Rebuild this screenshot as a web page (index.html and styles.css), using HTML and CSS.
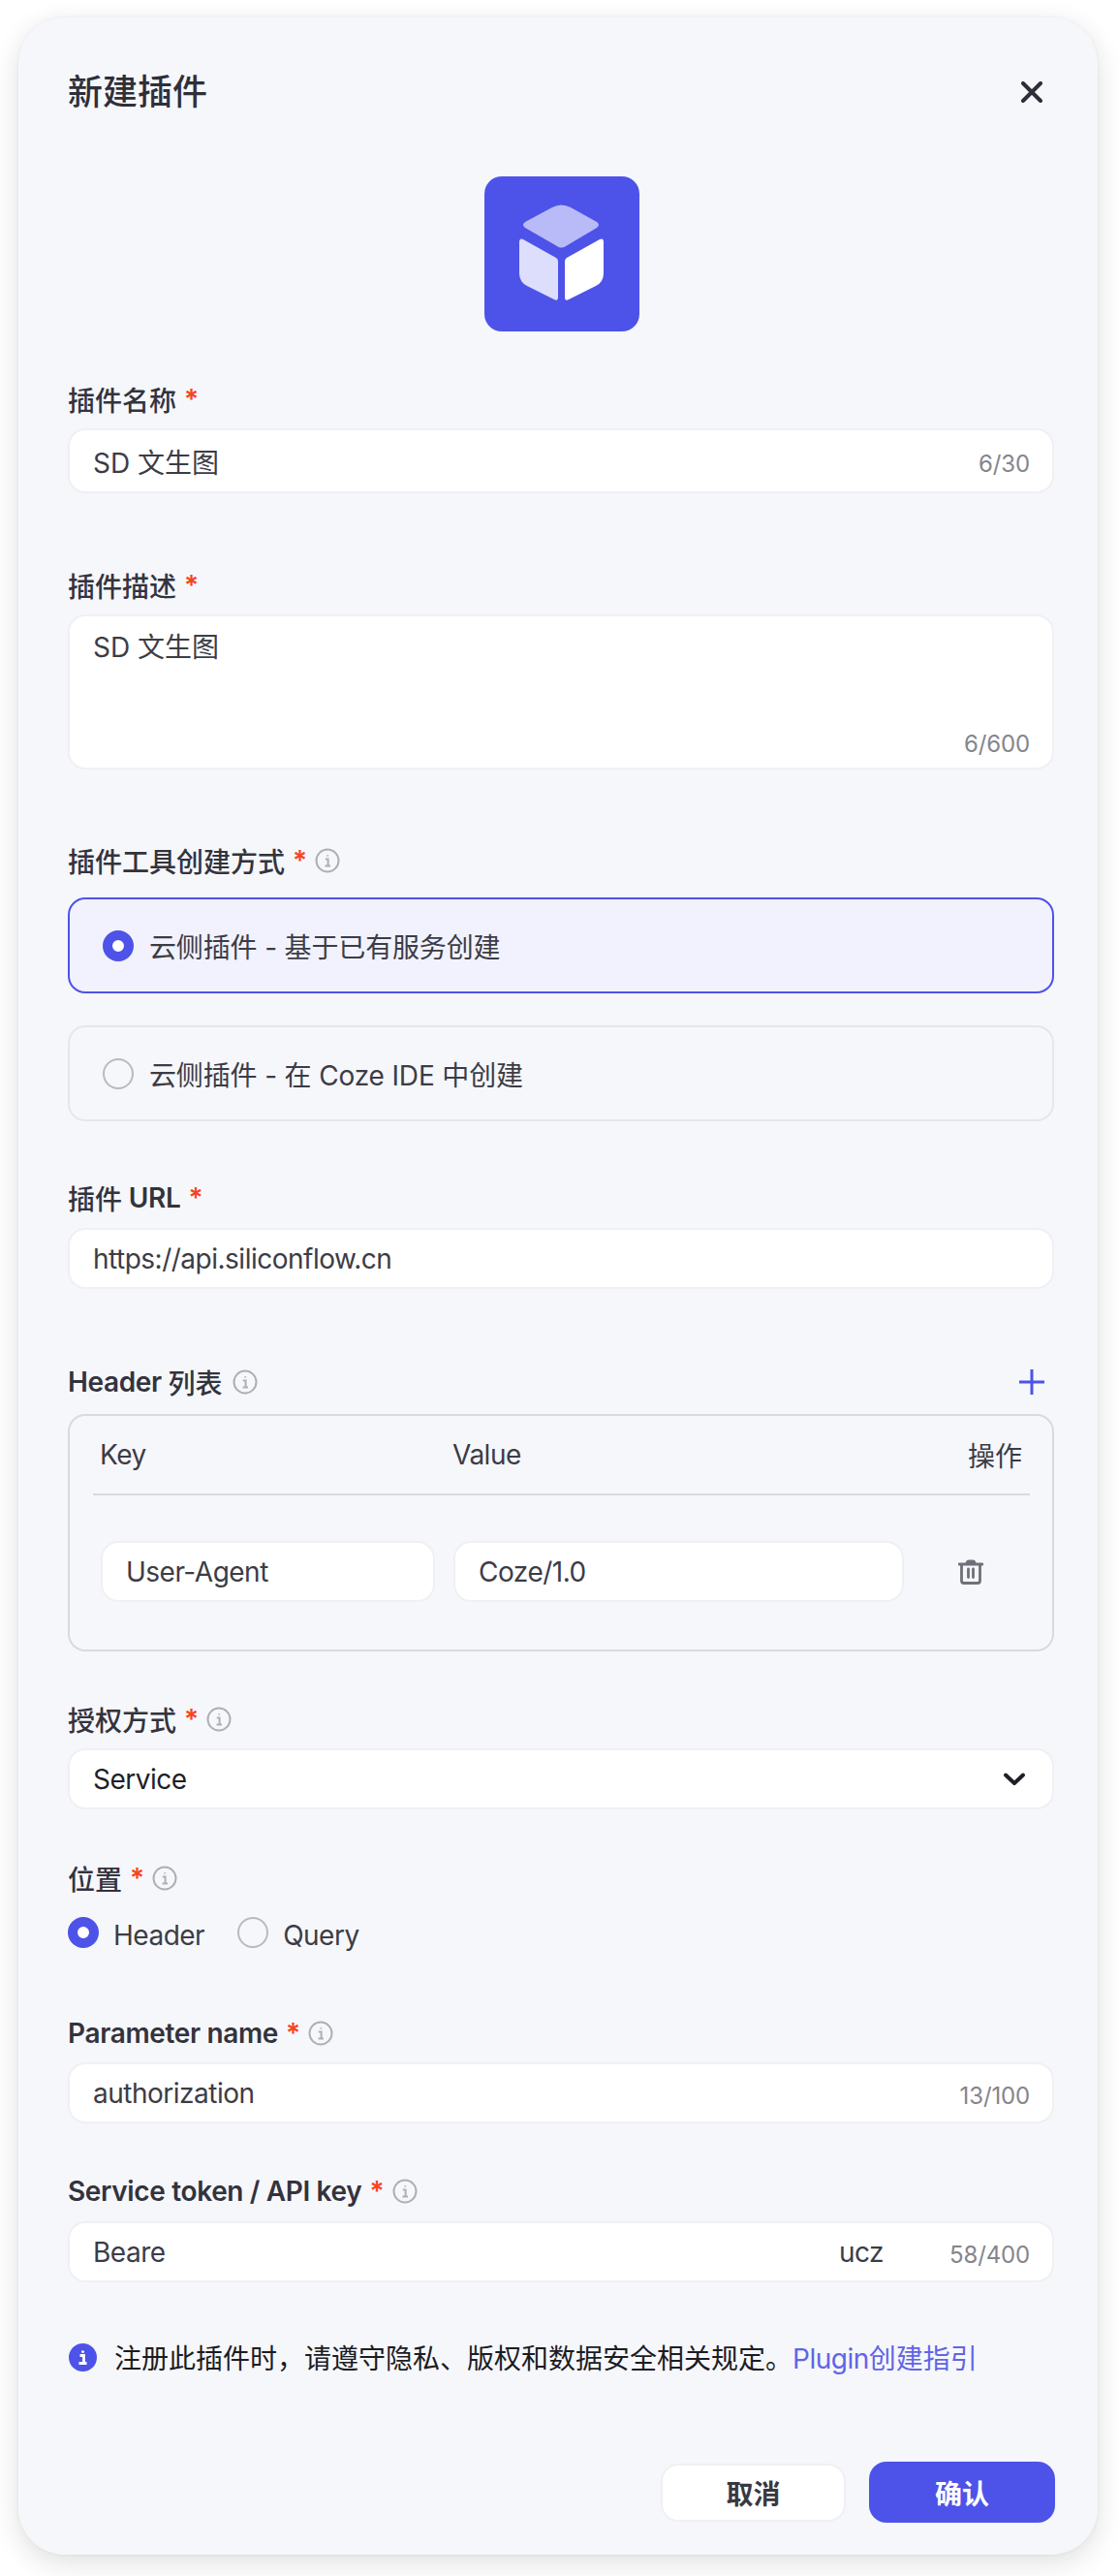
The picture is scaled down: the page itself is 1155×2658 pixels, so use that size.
FILE: index.html
```html
<!DOCTYPE html>
<html lang="zh-CN">
<head>
<meta charset="utf-8">
<title>新建插件</title>
<link rel="stylesheet" href="styles.css">
</head>
<body>
<svg class="defs" width="0" height="0" aria-hidden="true">
  <symbol id="info" viewBox="0 0 26 26">
    <circle cx="13" cy="13" r="11.5" fill="none" stroke="currentColor" stroke-width="2"/>
    <path d="M10.8 11.5H13.6V18M10.5 18.6H16M13.2 7.2V8.6" fill="none" stroke="currentColor" stroke-width="2"/>
  </symbol>
</svg>
<main class="dialog">
  <header class="head">
    <h1 class="title">新建插件</h1>
    <svg class="close" viewBox="0 0 22 22"><path d="M2 2L20 20M20 2L2 20"/></svg>
  </header>
  <div class="logo">
    <svg viewBox="0 0 160 160" width="160" height="160">
      <path fill="#b9bbf8" d="M70 32Q79 27 89 32L116 47Q120 50 116 53L84 72Q79 75 75 72L42 53Q38 50 42 47Z"/>
      <path fill="#dcdefc" d="M40 65L74 84Q76 85 76 88V125Q76 129 72 127L44 113Q36 109 36 100V68Q36 63 40 65Z"/>
      <path fill="#ffffff" d="M119 65L85 84Q83 85 83 88V125Q83 129 87 127L115 113Q123 109 123 100V68Q123 63 119 65Z"/>
    </svg>
  </div>

  <section class="field f-name">
    <div class="label gap-10">插件名称<span class="req">*</span></div>
    <div class="input tall"><span>SD 文生图</span><span class="count">6/30</span></div>
  </section>

  <section class="field f-desc">
    <div class="label gap-10">插件描述<span class="req">*</span></div>
    <div class="textarea"><span>SD 文生图</span><span class="count">6/600</span></div>
  </section>

  <section class="field f-mode">
    <div class="label gap-18">插件工具创建方式<span class="req">*</span><svg class="info"><use href="#info"/></svg></div>
    <div class="option selected"><i class="radio on"></i><span>云侧插件 - 基于已有服务创建</span></div>
    <div class="option"><i class="radio"></i><span>云侧插件 - 在 Coze IDE 中创建</span></div>
  </section>

  <section class="field f-url">
    <div class="label gap-11">插件 <span class="strong">&nbsp;URL</span><span class="req">*</span></div>
    <div class="input"><span class="en">https://api.siliconflow.cn</span></div>
  </section>

  <section class="field f-header">
    <div class="label gap-13 split">
      <span class="label-main"><span class="strong">Header&nbsp;</span>列表<svg class="info"><use href="#info"/></svg></span>
      <svg class="plus" viewBox="0 0 26 26"><path d="M13 0V26M0 13H26"/></svg>
    </div>
    <div class="table">
      <div class="thead"><span class="th-key en">Key</span><span class="th-value en">Value</span><span class="th-op">操作</span></div>
      <div class="trow">
        <div class="input"><span class="en">User-Agent</span></div>
        <div class="input"><span class="en">Coze/1.0</span></div>
        <svg class="trash" viewBox="0 0 26 26">
          <path d="M1 5H25M9 4.5Q9 2 11 2H15Q17 2 17 4.5M3.5 5V22Q3.5 24.5 6 24.5H20Q22.500 24.500 22.500 22V5M10.500 10V18.500M15.500 10V18.500"/>
        </svg>
      </div>
    </div>
  </section>

  <section class="field f-auth">
    <div class="label gap-10">授权方式<span class="req">*</span><svg class="info"><use href="#info"/></svg></div>
    <div class="input select"><span class="en">Service</span><svg class="chevron" viewBox="0 0 22 14"><path d="M2 2.500L11 11L20 2.500"/></svg></div>
  </section>

  <section class="field f-pos">
    <div class="label gap-20">位置<span class="req">*</span><svg class="info"><use href="#info"/></svg></div>
    <div class="radios">
      <i class="radio on"></i><span class="radio-text first en">Header</span>
      <i class="radio"></i><span class="radio-text en">Query</span>
    </div>
  </section>

  <section class="field f-param">
    <div class="label gap-10"><span class="strong">Parameter name</span><span class="req">*</span><svg class="info"><use href="#info"/></svg></div>
    <div class="input"><span class="en">authorization</span><span class="count">13/100</span></div>
  </section>

  <section class="field f-token">
    <div class="label gap-11"><span class="strong">Service token / API key</span><span class="req">*</span><svg class="info"><use href="#info"/></svg></div>
    <div class="input"><span class="en">Beare</span><span class="tail en">ucz</span><span class="count">58/400</span></div>
  </section>

  <p class="notice">
    <svg class="notice-icon" viewBox="0 0 29 29">
      <circle cx="14.500" cy="14.500" r="14.500" fill="#4d53e8"/>
      <path d="M11.500 12.500H15.500V20M10.500 20.500H18.500M14.500 7.500V9.800" fill="none" stroke="#fff" stroke-width="2.800"/>
    </svg>
    <span>注册此插件时，请遵守隐私、版权和数据安全相关规定。<span class="link"><span class="en">Plugin</span>创建指引</span></span>
  </p>

  <footer class="foot">
    <div class="btn cancel">取消</div>
    <div class="btn confirm">确认</div>
  </footer>
</main>
</body>
</html>
```

FILE: styles.css
```css
* { box-sizing: border-box; }
html, body { margin: 0; padding: 0; background: #fff; }
body {
  font-family: Inter, "Noto Sans CJK SC", "Noto Sans", sans-serif;
  font-size: 28px;
  color: #383843;
  height: 2658px;
  overflow: hidden;
}
.defs { position: absolute; }
.en { letter-spacing: -0.5px; }
.strong { font-weight: 600; letter-spacing: -0.35px; }

.dialog {
  width: 1114px;
  height: 2618px;
  margin: 18px 0 0 19px;
  padding: 0 45px 0 51px;
  background: #f6f7fb;
  border-radius: 48px;
  box-shadow: 0 8px 28px rgba(28, 31, 35, 0.14), 0 0 4px rgba(28, 31, 35, 0.05);
}

.head { height: 154px; display: flex; align-items: center; justify-content: space-between; }
.title { margin: 0; font-size: 36px; line-height: 50px; font-weight: 500; color: #2f2f39; }
.close { width: 22px; height: 22px; margin-right: 12px; fill: none; stroke: #2e2e38; stroke-width: 4px; stroke-linecap: round; }

.logo { width: 160px; height: 160px; margin: 10px 0 0 430px; background: #4d53e8; border-radius: 18px; }
.logo svg { display: block; }

.field { display: block; }
.f-name { margin-top: 50px; }
.f-desc { margin-top: 75px; }
.f-mode { margin-top: 74px; }
.f-url { margin-top: 59px; }
.f-header { margin-top: 76px; }
.f-auth { margin-top: 50px; }
.f-pos { margin-top: 51px; }
.f-param { margin-top: 68px; }
.f-token { margin-top: 50px; }

.label { display: flex; align-items: center; height: 40px; font-size: 28px; font-weight: 500; color: #33333d; }
.label-main { display: flex; align-items: center; }
.split { justify-content: space-between; }
.gap-10 { margin-bottom: 10px; }
.gap-11 { margin-bottom: 11px; }
.gap-13 { margin-bottom: 13px; }
.gap-18 { margin-bottom: 18px; }
.gap-20 { margin-bottom: 20px; }
.req { margin-left: 8px; color: #f5451f; font-weight: 600; }
.info { width: 26px; height: 26px; margin-left: 8px; color: #aeafb5; }
.label-main .info { margin-left: 10px; }

.input {
  display: flex;
  align-items: center;
  height: 63px;
  padding: 0 23px 0 24px;
  background: #fff;
  border: 2px solid #f0f0f4;
  border-radius: 18px;
  color: #3c3c46;
}
.input.tall { height: 67px; }
.count { margin-left: auto; padding-top: 6px; font-size: 24px; line-height: 30px; letter-spacing: -0.15px; color: #85858c; }
.tail { margin-left: auto; }
.tail + .count { margin-left: 68px; }

.textarea {
  display: flex;
  flex-direction: column;
  height: 160px;
  padding: 12px 23px 9px 24px;
  background: #fff;
  border: 2px solid #f0f0f4;
  border-radius: 18px;
  color: #3c3c46;
  line-height: 40px;
}
.textarea .count { margin-top: auto; align-self: flex-end; padding-top: 0; }

.option {
  display: flex;
  align-items: center;
  height: 99px;
  padding: 0 0 0 34px;
  border: 2px solid #e6e7ec;
  border-radius: 18px;
  color: #3c3c46;
  letter-spacing: -0.15px;
}
.option + .option { margin-top: 33px; }
.option.selected { background: #f1f2fd; border-color: #4d53e8; }
.option span { margin-left: 16px; }

.radio { display: block; flex: none; width: 32px; height: 32px; border: 2px solid #b9babf; border-radius: 50%; background: #f6f7fb; }
.radio.on { border: 10px solid #4d53e8; background: #fff; }

.plus { width: 26px; height: 26px; margin-right: 10px; fill: none; stroke: #4d53e8; stroke-width: 3px; }

.table { height: 245px; padding: 0 23px 0 24px; border: 2px solid #d9dae0; border-radius: 18px; }
.thead {
  display: flex;
  align-items: center;
  height: 82px;
  padding: 0 8px 0 7px;
  border-bottom: 2px solid #d9dae0;
  color: #3c3c46;
}
.th-key { width: 364px; }
.th-op { margin-left: auto; }
.trow { display: flex; align-items: center; margin: 47px 0 0 8px; }
.trow .input:nth-child(1) { width: 345px; margin-right: 19px; }
.trow .input:nth-child(2) { width: 465px; }
.trash { width: 26px; height: 26px; margin-left: 56px; fill: none; stroke: #6f7078; stroke-width: 2.800px; stroke-linecap: round; stroke-linejoin: round; }

.select { color: #1f1f28; justify-content: space-between; }
.chevron { width: 22px; height: 14px; margin-right: 5px; fill: none; stroke: #1f1f28; stroke-width: 4px; stroke-linecap: round; stroke-linejoin: round; }

.radios { display: flex; align-items: center; height: 32px; }
.radio-text { margin-left: 15px; padding-top: 6px; color: #3c3c46; }
.radio-text.first { margin-right: 34px; }

.notice { display: flex; align-items: center; height: 40px; margin: 57px 0 0; color: #1c1c23; }
.notice-icon { width: 29px; height: 29px; margin: 0 18px 0 1px; flex: none; }
.link { color: #6065e6; }

.foot { display: flex; align-items: center; justify-content: flex-end; height: 63px; margin: 88px -1px 0 0; }
.btn { display: flex; align-items: center; justify-content: center; font-weight: 600; border-radius: 18px; }
.cancel { width: 191px; height: 60px; margin-right: 24px; background: #fff; border: 2px solid #f0f0f4; color: #383843; }
.confirm { width: 192px; height: 63px; background: #4d53e8; color: #fff; }
```
